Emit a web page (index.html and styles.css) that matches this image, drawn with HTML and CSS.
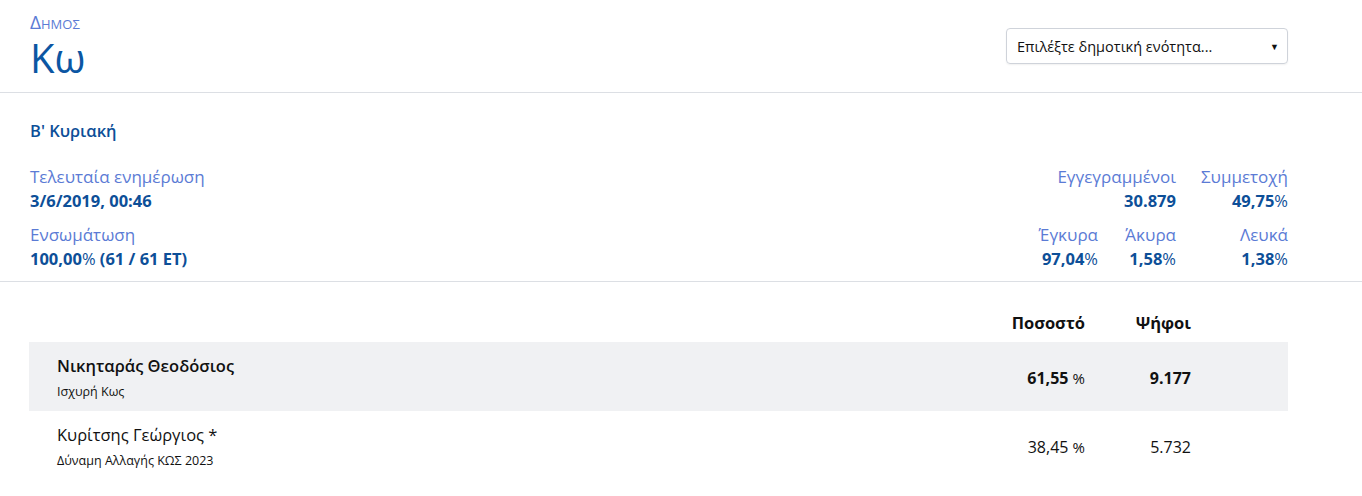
FILE: index.html
```html
<!DOCTYPE html>
<html lang="el">
<head>
<meta charset="utf-8">
<link rel="stylesheet" href="styles.css">
</head>
<body>
<header class="top">
  <div class="title">
    <div class="kicker">Δήμος</div>
    <h1 class="name">Κω</h1>
  </div>
  <div class="select">
    <span>Επιλέξτε δημοτική ενότητα...</span>
    <span class="caret">▼</span>
  </div>
</header>
<section class="info">
  <div class="round">Β' Κυριακή</div>
  <div class="stats">
    <div class="left">
      <div class="stat"><div class="lbl">Τελευταία ενημέρωση</div><div class="val">3/6/2019, 00:46</div></div>
      <div class="stat"><div class="lbl">Ενσωμάτωση</div><div class="val">100,00<span class="pc">%</span> (61 / 61 ΕΤ)</div></div>
    </div>
    <div class="right">
      <div class="stat span2"><div class="lbl">Εγγεγραμμένοι</div><div class="val">30.879</div></div>
      <div class="stat"><div class="lbl">Συμμετοχή</div><div class="val">49,75<span class="pc">%</span></div></div>
      <div class="stat"><div class="lbl">Έγκυρα</div><div class="val">97,04<span class="pc">%</span></div></div>
      <div class="stat"><div class="lbl">Άκυρα</div><div class="val">1,58<span class="pc">%</span></div></div>
      <div class="stat"><div class="lbl">Λευκά</div><div class="val">1,38<span class="pc">%</span></div></div>
    </div>
  </div>
</section>
<section class="results">
  <div class="row head">
    <div></div>
    <div class="num">Ποσοστό</div>
    <div class="num">Ψήφοι</div>
    <div></div>
  </div>
  <div class="row cand win">
    <div class="who"><div class="cname">Νικηταράς Θεοδόσιος</div><div class="party">Ισχυρή Κως</div></div>
    <div class="num">61,55 <span class="pct">%</span></div>
    <div class="num">9.177</div>
    <div></div>
  </div>
  <div class="row cand">
    <div class="who"><div class="cname">Κυρίτσης Γεώργιος *</div><div class="party">Δύναμη Αλλαγής ΚΩΣ 2023</div></div>
    <div class="num">38,45 <span class="pct">%</span></div>
    <div class="num">5.732</div>
    <div></div>
  </div>
</section>
</body>
</html>
```
FILE: styles.css
```css
html, body { margin: 0; padding: 0; background: #fff; }
body { font-family: "Open Sans", "Noto Sans", sans-serif; color: #111; }

.top {
  display: flex;
  justify-content: space-between;
  align-items: flex-start;
  padding: 11px 74px 0 30px;
  height: 81px;
  border-bottom: 1px solid #dcdfe4;
}
.kicker {
  font-size: 19px;
  line-height: 22px;
  font-variant: small-caps;
  color: #5b7bd5;
}
.name {
  margin: 1px 0 0;
  font-weight: 400;
  font-size: 40px;
  line-height: 48px;
  color: #0b56a3;
}
.select {
  margin-top: 17px;
  width: 262px;
  height: 34px;
  border: 1px solid #cfd3da;
  border-radius: 4px;
  box-shadow: 0 1px 2px rgba(0,0,0,0.06);
  display: flex;
  align-items: center;
  justify-content: space-between;
  padding: 0 8px 0 10px;
  font-size: 14.5px;
  color: #111;
}
.caret { font-size: 9px; }

.info {
  padding: 20px 74px 10px 30px;
  border-bottom: 1px solid #dcdfe4;
  color: #0d4f98;
}
.round {
  font-size: 16.5px;
  font-weight: 600;
  line-height: 36px;
  margin-bottom: 16px;
}
.stats { display: flex; justify-content: space-between; }
.left, .right { display: grid; row-gap: 10px; }
.right {
  grid-template-columns: 80px 78px 112px;
  justify-items: end;
  text-align: right;
}
.span2 { grid-column: span 2; }
.lbl { font-size: 17px; line-height: 24px; color: #5b7bd5; }
.val { font-size: 16.5px; line-height: 24px; font-weight: 700; }
.pc { font-weight: 400; }

.results { padding: 20px 74px 0 29px; }
.row {
  display: grid;
  grid-template-columns: 1fr 120px 106px 97px;
  align-items: center;
}
.head { height: 40px; font-weight: 700; font-size: 16.5px; }
.num { text-align: right; padding-top: 3px; }
.head .num { padding-top: 0; }
.cand { height: 69px; font-size: 16px; }
.win { background: #f0f1f3; font-weight: 700; }
.who { padding: 12px 0 9px 28px; align-self: start; }
.cname { font-size: 16.5px; line-height: 24px; }
.win .cname { font-weight: 600; }
.party { font-size: 12.5px; line-height: 20px; font-weight: 400; margin-top: 4px; }
.pct { font-weight: 400; font-size: 15px; }
```
